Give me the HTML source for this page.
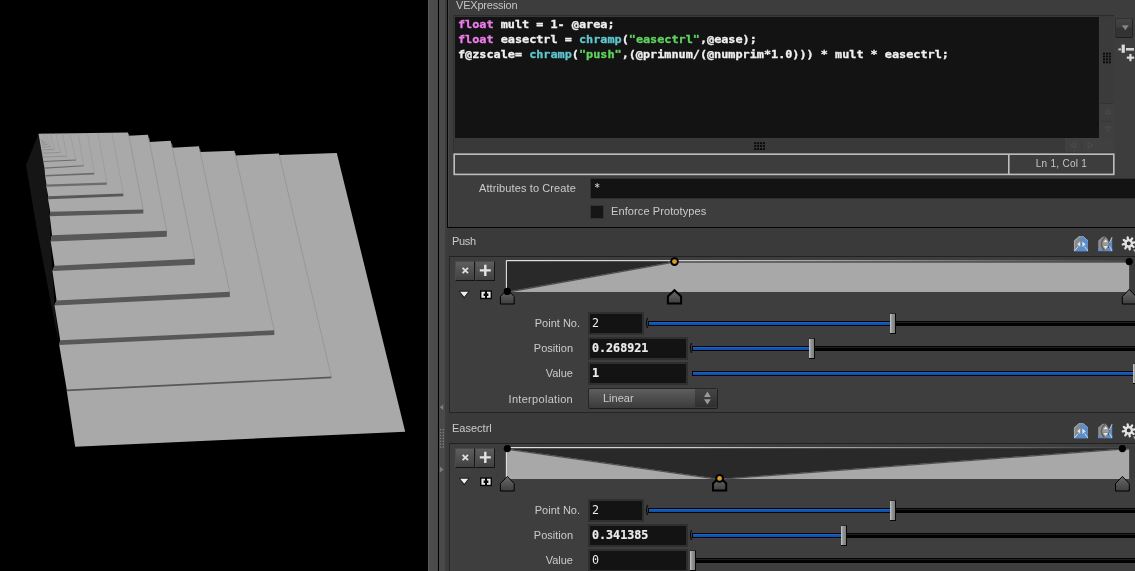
<!DOCTYPE html>
<html><head><meta charset="utf-8"><title>Houdini</title>
<style>
html,body{margin:0;padding:0;background:#000;}
body{width:1135px;height:571px;overflow:hidden;position:relative;font-family:"Liberation Sans",sans-serif;font-size:11.5px;color:#cbcbcb;}
.a{position:absolute;}
.lbl{position:absolute;white-space:nowrap;line-height:14px;height:14px;color:#cbcbcb;font-size:11px;will-change:transform;}
.r{text-align:right;}
.mono{font-family:"DejaVu Sans Mono","Liberation Mono",monospace;}
.code{position:absolute;left:458.1px;white-space:pre;font-family:"DejaVu Sans Mono","Liberation Mono",monospace;font-weight:bold;font-size:10.3px;line-height:15px;height:15px;color:#f0f0f0;transform:scaleX(1.1475);transform-origin:0 0;will-change:transform;-webkit-text-stroke:0.3px;}
.kw{color:#ec7cec;}
.fn{color:#5ec6cf;}
.st{color:#5fd25f;}
.fld{position:absolute;background:#131313;border:1px solid #2f2f2f;box-sizing:border-box;}
.fv{position:absolute;white-space:pre;font-family:"DejaVu Sans Mono","Liberation Mono",monospace;font-size:11.7px;line-height:14px;height:14px;color:#ececec;will-change:transform;}
.b{font-weight:bold;-webkit-text-stroke:0.2px;}
.btn{position:absolute;box-sizing:border-box;border-top:1px solid #4a4a4a;border-left:1px solid #4c4c4c;border-right:1px solid #161616;border-bottom:1.4px solid #141414;background:linear-gradient(#5e5e5e,#414141);}
</style></head>
<body>
<svg class="a" style="left:0;top:0" width="428" height="571" viewBox="0 0 428 571">
<rect width="428" height="571" fill="#000"/>
<polygon points="38.5,133.7 26,165 37,230 60,350 76,446 66.8,390 59,345 54.5,305 52.4,271 50.7,241 49.8,216 48,198 46.3,186 45.2,176 44.5,168" fill="#151515"/>
<polygon points="38.5,133.7 128.0,132.6 128.6,135.8 148.0,134.8 149.3,141.9 170.7,140.7 172.0,147.8 199.0,146.3 200.0,152.0 234.5,150.8 235.3,155.5 279.0,153.4 279.3,154.9 336.8,153.0 405.2,431.7 75.2,446.7 66.8,391.0 66.8,389.9 59.2,345.0 60.2,340.3 54.5,305.6 56.6,300.4 52.4,271.0 54.5,265.7 50.7,241.5 52.0,235.0 49.8,216.3 50.2,211.8 48.0,199.0 48.3,196.4 46.3,186.5 46.5,184.8 45.2,176.5 44.5,168.3" fill="#a9a9a9"/>
<polygon points="66.8,389.6 331.4,376.6 331.4,378.2 66.8,391.2" fill="#585858"/>
<polygon points="60.2,340.3 274.3,330.3 274.3,334.9 59.2,345.0" fill="#585858"/>
<polygon points="56.6,300.4 229.8,291.8 229.8,297.0 54.5,305.6" fill="#585858"/>
<polygon points="54.5,265.7 194.8,258.8 194.8,264.8 52.4,271.0" fill="#585858"/>
<polygon points="52.0,235.2 166.8,230.8 166.8,236.8 50.7,241.5" fill="#585858"/>
<polygon points="50.2,211.8 143.3,209.6 143.3,213.6 49.8,216.3" fill="#585858"/>
<polygon points="48.3,196.2 123.3,193.4 123.3,196.2 48.0,199.2" fill="#585858"/>
<polygon points="46.5,184.6 106.9,182.6 106.9,184.7 46.3,186.8" fill="#6c6c6c"/>
<polygon points="45.3,175.0 94.3,172.8 94.3,174.4 45.2,176.6" fill="#6c6c6c"/>
<polygon points="44.5,167.6 83.7,165.2 83.7,166.3 44.5,168.7" fill="#6c6c6c"/>
<polygon points="43.6,161.0 76.0,159.6 76.0,160.5 43.6,161.9" fill="#6c6c6c"/>
<line x1="42.6" y1="157.0" x2="67.0" y2="156.2" stroke="#858585" stroke-width="0.7"/>
<line x1="42.3" y1="153.2" x2="60.4" y2="152.4" stroke="#858585" stroke-width="0.7"/>
<line x1="42.2" y1="150.0" x2="54.6" y2="149.2" stroke="#858585" stroke-width="0.7"/>
<line x1="42.0" y1="147.4" x2="50.4" y2="146.6" stroke="#858585" stroke-width="0.7"/>
<line x1="41.9" y1="145.2" x2="47.4" y2="144.4" stroke="#858585" stroke-width="0.7"/>
<line x1="41.8" y1="143.4" x2="45.4" y2="142.6" stroke="#858585" stroke-width="0.7"/>
<line x1="41.7" y1="142.0" x2="44.0" y2="141.2" stroke="#858585" stroke-width="0.7"/>
<line x1="41.6" y1="140.8" x2="43.0" y2="140.0" stroke="#858585" stroke-width="0.7"/>
<line x1="41.5" y1="139.8" x2="42.2" y2="139.0" stroke="#858585" stroke-width="0.7"/>
<line x1="331.4" y1="377.0" x2="279.3" y2="155.0" stroke="#939393" stroke-width="0.8"/>
<line x1="274.3" y1="331.0" x2="235.0" y2="153.0" stroke="#939393" stroke-width="0.8"/>
<line x1="229.8" y1="292.0" x2="199.6" y2="149.0" stroke="#939393" stroke-width="0.8"/>
<line x1="194.8" y1="259.0" x2="171.5" y2="143.5" stroke="#939393" stroke-width="0.8"/>
<line x1="166.8" y1="231.0" x2="148.7" y2="137.5" stroke="#939393" stroke-width="0.8"/>
<line x1="143.3" y1="210.0" x2="128.5" y2="134.0" stroke="#939393" stroke-width="0.8"/>
<line x1="123.3" y1="193.5" x2="112.0" y2="133.0" stroke="#9a9a9a" stroke-width="0.7"/>
<line x1="106.9" y1="182.8" x2="98.0" y2="133.0" stroke="#9a9a9a" stroke-width="0.7"/>
<line x1="94.3" y1="173.0" x2="87.5" y2="133.2" stroke="#9a9a9a" stroke-width="0.7"/>
<line x1="83.7" y1="165.4" x2="78.0" y2="133.3" stroke="#9a9a9a" stroke-width="0.7"/>
<line x1="76.0" y1="159.8" x2="70.0" y2="133.4" stroke="#9a9a9a" stroke-width="0.7"/>
<line x1="67.0" y1="156.2" x2="62.3" y2="133.4" stroke="#9a9a9a" stroke-width="0.7"/>
<line x1="60.4" y1="152.4" x2="56.0" y2="133.5" stroke="#9a9a9a" stroke-width="0.7"/>
<line x1="54.6" y1="149.2" x2="49.7" y2="133.5" stroke="#9a9a9a" stroke-width="0.7"/>
<line x1="50.4" y1="146.6" x2="45.6" y2="133.6" stroke="#9a9a9a" stroke-width="0.7"/>
<line x1="47.4" y1="144.4" x2="42.6" y2="133.6" stroke="#9a9a9a" stroke-width="0.7"/>
</svg>
<div class="a" style="left:428px;top:0;width:707px;height:571px;background:#3a3a3a"></div>
<div class="a" style="left:428px;top:0;width:10px;height:571px;background:linear-gradient(90deg,#5e5e5e 0,#4d4d4d 1.5px,#4a4a4a 9px,#444 10px)"></div>
<div class="a" style="left:438px;top:0;width:1px;height:571px;background:#000"></div>
<div class="a" style="left:439px;top:0;width:5.5px;height:571px;background:#494949"></div>
<div class="a" style="left:444.5px;top:0;width:3px;height:571px;background:#3c3c3c"></div>
<svg class="a" style="left:438px;top:400px" width="10" height="80" viewBox="438 400 10 80"><polygon points="443.2,404.6 443.2,410 439.6,407.3" fill="#7d7d7d"/><polygon points="439.8,466.4 439.8,472.4 443.6,469.4" fill="#7d7d7d"/><rect x="439.8" y="429.0" width="1.4" height="1.4" fill="#7e7e7e"/><rect x="442.6" y="429.0" width="1.4" height="1.4" fill="#7e7e7e"/><rect x="439.8" y="431.9" width="1.4" height="1.4" fill="#7e7e7e"/><rect x="442.6" y="431.9" width="1.4" height="1.4" fill="#7e7e7e"/><rect x="439.8" y="434.8" width="1.4" height="1.4" fill="#7e7e7e"/><rect x="442.6" y="434.8" width="1.4" height="1.4" fill="#7e7e7e"/><rect x="439.8" y="437.7" width="1.4" height="1.4" fill="#7e7e7e"/><rect x="442.6" y="437.7" width="1.4" height="1.4" fill="#7e7e7e"/><rect x="439.8" y="440.6" width="1.4" height="1.4" fill="#7e7e7e"/><rect x="442.6" y="440.6" width="1.4" height="1.4" fill="#7e7e7e"/><rect x="439.8" y="443.5" width="1.4" height="1.4" fill="#7e7e7e"/><rect x="442.6" y="443.5" width="1.4" height="1.4" fill="#7e7e7e"/><rect x="439.8" y="446.4" width="1.4" height="1.4" fill="#7e7e7e"/><rect x="442.6" y="446.4" width="1.4" height="1.4" fill="#7e7e7e"/></svg>
<div class="a" style="left:447px;top:0;width:688px;height:227px;background:#3d3d3d;border-left:1.4px solid #050505;border-bottom:1.6px solid #050505;box-sizing:content-box"></div>
<div class="a" style="left:448.4px;top:0;width:1px;height:227px;background:#484848"></div>
<div class="lbl" style="left:455.8px;top:-2.1px;letter-spacing:-0.2px;color:#c4c4c4">VEXpression</div>
<div class="a" style="left:453px;top:15px;width:661px;height:138px;background:#393939;border-top:1.5px solid #2c2c2c;border-left:1.5px solid #313131;box-sizing:border-box"></div>
<div class="a" style="left:455px;top:17px;width:644px;height:121px;background:#131313"></div>
<div class="code" style="top:16.6px"><span class="kw">float</span> mult = 1- @area;</div>
<div class="code" style="top:31.6px"><span class="kw">float</span> easectrl = <span class="fn">chramp</span>(<span class="st">"easectrl"</span>,@ease);</div>
<div class="code" style="top:46.6px">f@zscale= <span class="fn">chramp</span>(<span class="st">"push"</span>,(@primnum/(@numprim*1.0))) * mult * easectrl;</div>
<div class="a" style="left:1099px;top:17px;width:15px;height:121px;background:#3f3f3f"></div>
<div class="a" style="left:1099.6px;top:17px;width:14px;height:85.6px;background:#3b3b3b;border-bottom:1px solid #343434;border-radius:0 0 2px 2px"></div>
<div class="a" style="left:1064.6px;top:138.4px;width:49.4px;height:14px;background:#404040"></div>
<svg class="a" style="left:0;top:0;pointer-events:none" width="1135" height="571" viewBox="0 0 1135 571"><rect x="1103.0" y="52.6" width="2.0" height="2.0" fill="#0a0a0a"/><rect x="1103.0" y="55.5" width="2.0" height="2.0" fill="#0a0a0a"/><rect x="1103.0" y="58.4" width="2.0" height="2.0" fill="#0a0a0a"/><rect x="1103.0" y="61.3" width="2.0" height="2.0" fill="#0a0a0a"/><rect x="1105.9" y="52.6" width="2.0" height="2.0" fill="#0a0a0a"/><rect x="1105.9" y="55.5" width="2.0" height="2.0" fill="#0a0a0a"/><rect x="1105.9" y="58.4" width="2.0" height="2.0" fill="#0a0a0a"/><rect x="1105.9" y="61.3" width="2.0" height="2.0" fill="#0a0a0a"/><rect x="1108.8" y="52.6" width="2.0" height="2.0" fill="#0a0a0a"/><rect x="1108.8" y="55.5" width="2.0" height="2.0" fill="#0a0a0a"/><rect x="1108.8" y="58.4" width="2.0" height="2.0" fill="#0a0a0a"/><rect x="1108.8" y="61.3" width="2.0" height="2.0" fill="#0a0a0a"/><rect x="754.2" y="142.2" width="2.0" height="2.0" fill="#0a0a0a"/><rect x="754.2" y="145.1" width="2.0" height="2.0" fill="#0a0a0a"/><rect x="754.2" y="148.0" width="2.0" height="2.0" fill="#0a0a0a"/><rect x="757.1" y="142.2" width="2.0" height="2.0" fill="#0a0a0a"/><rect x="757.1" y="145.1" width="2.0" height="2.0" fill="#0a0a0a"/><rect x="757.1" y="148.0" width="2.0" height="2.0" fill="#0a0a0a"/><rect x="760.0" y="142.2" width="2.0" height="2.0" fill="#0a0a0a"/><rect x="760.0" y="145.1" width="2.0" height="2.0" fill="#0a0a0a"/><rect x="760.0" y="148.0" width="2.0" height="2.0" fill="#0a0a0a"/><rect x="762.9" y="142.2" width="2.0" height="2.0" fill="#0a0a0a"/><rect x="762.9" y="145.1" width="2.0" height="2.0" fill="#0a0a0a"/><rect x="762.9" y="148.0" width="2.0" height="2.0" fill="#0a0a0a"/><polygon points="1107.6,108.8 1110.4,113.6 1104.8,113.6" fill="none" stroke="#4e4e4e" stroke-width="0.9"/><line x1="1101" y1="121.4" x2="1113" y2="121.4" stroke="#383838" stroke-width="0.9"/><polygon points="1107.6,131.6 1110.4,127.2 1104.8,127.2" fill="none" stroke="#4e4e4e" stroke-width="0.9"/><polygon points="1070.4,145.4 1075.4,142.8 1075.4,148" fill="none" stroke="#4e4e4e" stroke-width="0.9"/><polygon points="1093.2,145.4 1088.2,142.8 1088.2,148" fill="none" stroke="#4e4e4e" stroke-width="0.9"/><line x1="1081.8" y1="141" x2="1081.8" y2="150" stroke="#3a3a3a" stroke-width="0.9"/><rect x="454.2" y="154.2" width="659.6" height="20.2" fill="#3d3d3d" stroke="#bebebe" stroke-width="1.6"/><line x1="1008.8" y1="154" x2="1008.8" y2="174.5" stroke="#bebebe" stroke-width="1.6"/></svg>
<div class="lbl" style="left:1009px;top:157.3px;width:105px;text-align:center;font-size:10px;letter-spacing:0.28px;color:#c6c6c6">Ln 1, Col 1</div>
<div class="a" style="left:1115.4px;top:18.4px;width:18px;height:19.2px;box-sizing:border-box;border-top:1px solid #303030;border-left:1px solid #2e2e2e;border-right:1.2px solid #242424;border-bottom:1.6px solid #1e1e1e;border-radius:2px;background:linear-gradient(#444 0,#3b3b3b 50%,#323232 52%,#343434 100%)"></div>
<svg class="a" style="left:1114px;top:16px" width="21" height="46" viewBox="1114 16 21 46"><polygon points="1121.8,25.2 1128.8,25.2 1125.3,30.2" fill="#848484"/><rect x="1121.6" y="44.6" width="3.2" height="8.2" fill="#dcdcdc"/><rect x="1118.4" y="48.4" width="2.6" height="2" fill="#c8c8c8"/><rect x="1126" y="48" width="8" height="2.6" fill="#d4d4d4"/><rect x="1129.4" y="54" width="2.1" height="7.2" fill="#e0e0e0"/><rect x="1126.8" y="56.6" width="7.4" height="2.1" fill="#e0e0e0"/></svg>
<div class="lbl" style="left:478.6px;top:181.4px;letter-spacing:0.11px">Attributes to Create</div>
<div class="fld" style="left:590px;top:178px;width:560px;height:21.4px"></div>
<div class="fv" style="left:594.2px;top:180.4px;font-size:10.5px">*</div>
<div class="a" style="left:590.4px;top:205.4px;width:13.6px;height:13.2px;box-sizing:border-box;background:#161616;border:1px solid #333"></div>
<div class="lbl" style="left:611.2px;top:204.2px;letter-spacing:0.1px">Enforce Prototypes</div>
<div class="lbl" style="left:452.4px;top:233.9px;letter-spacing:-0.3px">Push</div>
<svg class="a" style="left:1070px;top:234.0px" width="65" height="20" viewBox="1070 234 65 20"><polygon points="1074.2,251.2 1074.2,240.6 1079,236.4 1083.4,236.4 1088,240.6 1088,251.2" fill="#5a8dca"/><polygon points="1074.2,251.2 1074.2,240.6 1079,236.4 1080.4,236.4 1080.4,245 " fill="#8a8a8a"/><polygon points="1074.2,251.2 1080.6,243.6 1081.6,243.6 1088,251.2" fill="#5a8dca"/><line x1="1081.2" y1="238" x2="1081.2" y2="248" stroke="#7a8694" stroke-width="1"/><polygon points="1077.2,244.2 1080.2,241.6 1080.2,246.8" fill="#e4e4e4"/><polygon points="1085.6,244.2 1082.4,241.4 1082.4,247" fill="#e4e4e4"/><polyline points="1074.4,251 1074.4,240.8 1079,236.6 1083.4,236.6 1088,240.8" fill="none" stroke="#c4ccd4" stroke-width="0.7" opacity="0.8"/><line x1="1074.4" y1="251" x2="1078.2" y2="246.6" stroke="#e8e8e8" stroke-width="0.8"/><line x1="1088" y1="251" x2="1084.6" y2="246.6" stroke="#e8e8e8" stroke-width="0.8"/><polygon points="1098,248 1112.2,248 1112.2,251.2 1098,251.2" fill="#5a8dca"/><polygon points="1112.2,237 1112.2,251.2 1108.6,251.2 1109.2,244" fill="#5a8dca"/><path d="M1098.2,240.6 L1102.6,236.8 L1105.6,236.8 Q1109,240 1109,244 Q1109,248.4 1104.2,251.4 L1098.2,247.4 Z" fill="#8c8c8c"/><path d="M1105.4,237.2 Q1101.4,240 1101.4,244 Q1101.4,248 1104.4,250.8" fill="none" stroke="#5f5f5f" stroke-width="1.3"/><polygon points="1105.6,239.4 1108,242.2 1103.2,242.2" fill="#e6e6e6"/><polygon points="1105.6,249 1108,246 1103.2,246" fill="#e6e6e6"/><rect x="1103" y="243.2" width="5.6" height="2" fill="#9c9c9c"/><line x1="1112" y1="237.2" x2="1109.4" y2="243" stroke="#e4e4e4" stroke-width="0.8"/><line x1="1112" y1="251" x2="1109.6" y2="246.4" stroke="#e4e4e4" stroke-width="0.8"/><line x1="1132.05" y1="242.81" x2="1134.61" y2="242.36" stroke="#e2e2e2" stroke-width="2.3" stroke-linecap="round"/><line x1="1131.49" y1="245.35" x2="1133.61" y2="246.84" stroke="#e2e2e2" stroke-width="2.3" stroke-linecap="round"/><line x1="1129.29" y1="246.75" x2="1129.74" y2="249.31" stroke="#e2e2e2" stroke-width="2.3" stroke-linecap="round"/><line x1="1126.75" y1="246.19" x2="1125.26" y2="248.31" stroke="#e2e2e2" stroke-width="2.3" stroke-linecap="round"/><line x1="1125.35" y1="243.99" x2="1122.79" y2="244.44" stroke="#e2e2e2" stroke-width="2.3" stroke-linecap="round"/><line x1="1125.91" y1="241.45" x2="1123.79" y2="239.96" stroke="#e2e2e2" stroke-width="2.3" stroke-linecap="round"/><line x1="1128.11" y1="240.05" x2="1127.66" y2="237.49" stroke="#e2e2e2" stroke-width="2.3" stroke-linecap="round"/><line x1="1130.65" y1="240.61" x2="1132.14" y2="238.49" stroke="#e2e2e2" stroke-width="2.3" stroke-linecap="round"/><circle cx="1128.7" cy="243.4" r="3.1" fill="none" stroke="#e2e2e2" stroke-width="2.4"/><circle cx="1128.7" cy="243.4" r="1.8" fill="#333"/><polygon points="1133,249.6 1135,249.6 1135,252.6" fill="#bdbdbd"/></svg>
<div class="a" style="left:449px;top:255.8px;width:700px;height:157.4px;box-sizing:border-box;border:1px solid #262626;border-top:1.4px solid #222;border-bottom:1.3px solid #242424;background:#3e3e3e"></div>
<div class="btn" style="left:454.6px;top:260.6px;width:20.2px;height:20.6px"></div>
<div class="btn" style="left:474.8px;top:260.6px;width:20.2px;height:20.6px"></div>
<svg class="a" style="left:450px;top:258.0px" width="50" height="45" viewBox="450 258 50 45"><path d="M462.6,267.8 L468,273.2 M468,267.8 L462.6,273.2" stroke="#dcdcdc" stroke-width="1.9" fill="none"/><path d="M479.8,270.4 H490.8 M485.3,264.8 V276" stroke="#e4e4e4" stroke-width="2.4" fill="none"/><polygon points="458.6,290.8 469.8,290.8 464.2,298.4" fill="#1c1c1c"/><polygon points="460.2,291.8 468.2,291.8 464.2,296.8" fill="#f0f0f0"/><rect x="480" y="290.4" width="12" height="8.8" fill="#080808"/><path d="M481.4,291.8 H485 V293.6 H483.6 V296 H485 V297.8 H481.4 Z M490.6,291.8 H487 V293.6 H488.4 V296 H487 V297.8 H490.6 Z" fill="#ececec"/><polygon points="484,294.4 488,294.4 486,297.4" fill="#0a0a0a"/></svg>
<svg class="a" style="left:495px;top:256.0px" width="640" height="52" viewBox="495 256 640 52">
<rect x="506.4" y="260.6" width="628.6" height="31.4" fill="#292929"/>
<rect x="1129.5" y="259.6" width="8" height="32.4" fill="#3b3b3b"/>
<polygon points="506.9,292.0 506.4,292.0 673.9,261.8 1129.2,261.8 1129.2,292.0" fill="#a8a8a8"/>
<polyline points="506.4,292.3 673.9,262.1 1129.2,262.1" fill="none" stroke="#505050" stroke-width="1.3"/>
<rect x="506.4" y="260.1" width="620.8" height="1.1" fill="url(#tg)"/>
<defs><linearGradient id="tg" x1="0" y1="0" x2="1" y2="0"><stop offset="0" stop-color="#f2f2f2"/><stop offset="0.3" stop-color="#dcdcdc"/><stop offset="0.62" stop-color="#9c9c9c"/><stop offset="0.9" stop-color="#5c5c5c"/><stop offset="1" stop-color="#444"/></linearGradient></defs>
<line x1="506.4" y1="260.4" x2="506.4" y2="292.0" stroke="#e4e4e4" stroke-width="1.1"/>
<polygon points="507.3,289.4 514.2,296.6 514.2,304 500.4,304 500.4,296.6" fill="url(#mg)" stroke="#000" stroke-width="1" stroke-linejoin="miter"/>
<polygon points="674.5,290.2 681.1,296.4 681.1,303.6 667.9,303.6 667.9,296.4" fill="url(#mg)" stroke="#000" stroke-width="2" stroke-linejoin="miter"/>
<polygon points="1129.2,289.4 1136.1,296.6 1136.1,304 1122.3,304 1122.3,296.6" fill="url(#mg)" stroke="#000" stroke-width="1" stroke-linejoin="miter"/>
<circle cx="507.3" cy="291.4" r="3.6" fill="#000"/>
<circle cx="674.5" cy="261.6" r="4.3" fill="#000"/><circle cx="674.5" cy="261.6" r="2.4" fill="#dc9c28"/>
<circle cx="1129.2" cy="261.6" r="3.6" fill="#000"/>
<defs><linearGradient id="mg" x1="0" y1="0" x2="0" y2="1"><stop offset="0" stop-color="#6a6a6a"/><stop offset="1" stop-color="#3e3e3e"/></linearGradient></defs>
</svg>
<div class="lbl r" style="left:479.6px;top:316.0px;width:100px;letter-spacing:0">Point No.</div>
<div class="fld" style="left:588.0px;top:312.4px;width:56.0px;height:22.4px;border-width:2px"></div>
<div class="fv" style="left:592.4px;top:316.1px">2</div>
<div class="a" style="left:648.0px;top:321.0px;width:491.4px;height:4.8px;background:linear-gradient(#050505 0,#050505 1.1px,#2c2c2c 1.2px,#101010 1.9px,#020202 2px)"></div>
<div class="a" style="left:648.0px;top:321.0px;width:244.1px;height:4.8px;background:#050505"></div>
<div class="a" style="left:648.6px;top:322.0px;width:244.1px;height:3.1px;background:linear-gradient(#2969c0,#0e55b6 45%,#0c50ae)"></div>
<svg class="a" style="left:644.0px;top:317.4px" width="5" height="12" viewBox="0 0 5 12"><path d="M3.6,1 Q1.2,6 3.6,11" fill="none" stroke="#0c0c0c" stroke-width="1.2"/></svg>
<div class="a" style="left:889.6px;top:312.7px;width:6.4px;height:21.2px;box-sizing:border-box;border-top:1px solid #2c2c2c;border-left:0;border-right:1.1px solid #080808;border-bottom:1.1px solid #080808;background:linear-gradient(90deg,#cacaca 0,#a8a8a8 1.2px,#939393 2px,#7e7e7e 100%)"></div>
<div class="lbl r" style="left:473.4px;top:341.0px;width:100px;letter-spacing:0">Position</div>
<div class="fld" style="left:588.0px;top:337.4px;width:100.4px;height:22.4px;border-width:2px"></div>
<div class="fv b" style="left:592.4px;top:341.1px">0.268921</div>
<div class="a" style="left:692.4px;top:346.0px;width:447.0px;height:4.8px;background:linear-gradient(#050505 0,#050505 1.1px,#2c2c2c 1.2px,#101010 1.9px,#020202 2px)"></div>
<div class="a" style="left:692.4px;top:346.0px;width:119.0px;height:4.8px;background:#050505"></div>
<div class="a" style="left:693.0px;top:347.0px;width:119.0px;height:3.1px;background:linear-gradient(#2969c0,#0e55b6 45%,#0c50ae)"></div>
<svg class="a" style="left:688.4px;top:342.4px" width="5" height="12" viewBox="0 0 5 12"><path d="M3.6,1 Q1.2,6 3.6,11" fill="none" stroke="#0c0c0c" stroke-width="1.2"/></svg>
<div class="a" style="left:808.9px;top:337.7px;width:6.4px;height:21.2px;box-sizing:border-box;border-top:1px solid #2c2c2c;border-left:0;border-right:1.1px solid #080808;border-bottom:1.1px solid #080808;background:linear-gradient(90deg,#cacaca 0,#a8a8a8 1.2px,#939393 2px,#7e7e7e 100%)"></div>
<div class="lbl r" style="left:473.4px;top:365.8px;width:100px;letter-spacing:0">Value</div>
<div class="fld" style="left:588.0px;top:362.2px;width:100.4px;height:22.4px;border-width:2px"></div>
<div class="fv b" style="left:592.4px;top:365.9px">1</div>
<div class="a" style="left:692.4px;top:370.8px;width:447.0px;height:4.8px;background:linear-gradient(#050505 0,#050505 1.1px,#2c2c2c 1.2px,#101010 1.9px,#020202 2px)"></div>
<div class="a" style="left:692.4px;top:370.8px;width:442.8px;height:4.8px;background:#050505"></div>
<div class="a" style="left:693.0px;top:371.8px;width:442.8px;height:3.1px;background:linear-gradient(#2969c0,#0e55b6 45%,#0c50ae)"></div>
<div class="a" style="left:1132.7px;top:362.5px;width:6.4px;height:21.2px;box-sizing:border-box;border-top:1px solid #2c2c2c;border-left:0;border-right:1.1px solid #080808;border-bottom:1.1px solid #080808;background:linear-gradient(90deg,#cacaca 0,#a8a8a8 1.2px,#939393 2px,#7e7e7e 100%)"></div>
<div class="lbl r" style="left:473.4px;top:391.5px;width:100px;letter-spacing:0.3px">Interpolation</div>
<div class="a" style="left:588.4px;top:387.6px;width:129.8px;height:21.2px;box-sizing:border-box;border:1px solid #262626;border-bottom:1.6px solid #1c1c1c;border-right:1.3px solid #1e1e1e;border-radius:2px;background:linear-gradient(#5e5e5e,#3b3b3b)"></div>
<div class="a" style="left:695.4px;top:388.6px;width:21.2px;height:18.8px;border-radius:0 2px 2px 0;background:linear-gradient(#454545,#2f2f2f)"></div>
<div class="lbl" style="left:603.2px;top:390.5px">Linear</div>
<svg class="a" style="left:700px;top:390.0px" width="14" height="16" viewBox="700 390 14 16"><polygon points="707.4,391.4 710.8,397 704,397" fill="#9a9a9a"/><polygon points="707.4,404.4 710.8,399.2 704,399.2" fill="#9a9a9a"/></svg>
<div class="lbl" style="left:452.4px;top:420.9px;letter-spacing:0px">Easectrl</div>
<svg class="a" style="left:1070px;top:421.0px" width="65" height="20" viewBox="1070 234 65 20"><polygon points="1074.2,251.2 1074.2,240.6 1079,236.4 1083.4,236.4 1088,240.6 1088,251.2" fill="#5a8dca"/><polygon points="1074.2,251.2 1074.2,240.6 1079,236.4 1080.4,236.4 1080.4,245 " fill="#8a8a8a"/><polygon points="1074.2,251.2 1080.6,243.6 1081.6,243.6 1088,251.2" fill="#5a8dca"/><line x1="1081.2" y1="238" x2="1081.2" y2="248" stroke="#7a8694" stroke-width="1"/><polygon points="1077.2,244.2 1080.2,241.6 1080.2,246.8" fill="#e4e4e4"/><polygon points="1085.6,244.2 1082.4,241.4 1082.4,247" fill="#e4e4e4"/><polyline points="1074.4,251 1074.4,240.8 1079,236.6 1083.4,236.6 1088,240.8" fill="none" stroke="#c4ccd4" stroke-width="0.7" opacity="0.8"/><line x1="1074.4" y1="251" x2="1078.2" y2="246.6" stroke="#e8e8e8" stroke-width="0.8"/><line x1="1088" y1="251" x2="1084.6" y2="246.6" stroke="#e8e8e8" stroke-width="0.8"/><polygon points="1098,248 1112.2,248 1112.2,251.2 1098,251.2" fill="#5a8dca"/><polygon points="1112.2,237 1112.2,251.2 1108.6,251.2 1109.2,244" fill="#5a8dca"/><path d="M1098.2,240.6 L1102.6,236.8 L1105.6,236.8 Q1109,240 1109,244 Q1109,248.4 1104.2,251.4 L1098.2,247.4 Z" fill="#8c8c8c"/><path d="M1105.4,237.2 Q1101.4,240 1101.4,244 Q1101.4,248 1104.4,250.8" fill="none" stroke="#5f5f5f" stroke-width="1.3"/><polygon points="1105.6,239.4 1108,242.2 1103.2,242.2" fill="#e6e6e6"/><polygon points="1105.6,249 1108,246 1103.2,246" fill="#e6e6e6"/><rect x="1103" y="243.2" width="5.6" height="2" fill="#9c9c9c"/><line x1="1112" y1="237.2" x2="1109.4" y2="243" stroke="#e4e4e4" stroke-width="0.8"/><line x1="1112" y1="251" x2="1109.6" y2="246.4" stroke="#e4e4e4" stroke-width="0.8"/><line x1="1132.05" y1="242.81" x2="1134.61" y2="242.36" stroke="#e2e2e2" stroke-width="2.3" stroke-linecap="round"/><line x1="1131.49" y1="245.35" x2="1133.61" y2="246.84" stroke="#e2e2e2" stroke-width="2.3" stroke-linecap="round"/><line x1="1129.29" y1="246.75" x2="1129.74" y2="249.31" stroke="#e2e2e2" stroke-width="2.3" stroke-linecap="round"/><line x1="1126.75" y1="246.19" x2="1125.26" y2="248.31" stroke="#e2e2e2" stroke-width="2.3" stroke-linecap="round"/><line x1="1125.35" y1="243.99" x2="1122.79" y2="244.44" stroke="#e2e2e2" stroke-width="2.3" stroke-linecap="round"/><line x1="1125.91" y1="241.45" x2="1123.79" y2="239.96" stroke="#e2e2e2" stroke-width="2.3" stroke-linecap="round"/><line x1="1128.11" y1="240.05" x2="1127.66" y2="237.49" stroke="#e2e2e2" stroke-width="2.3" stroke-linecap="round"/><line x1="1130.65" y1="240.61" x2="1132.14" y2="238.49" stroke="#e2e2e2" stroke-width="2.3" stroke-linecap="round"/><circle cx="1128.7" cy="243.4" r="3.1" fill="none" stroke="#e2e2e2" stroke-width="2.4"/><circle cx="1128.7" cy="243.4" r="1.8" fill="#333"/><polygon points="1133,249.6 1135,249.6 1135,252.6" fill="#bdbdbd"/></svg>
<div class="a" style="left:449px;top:442.8px;width:700px;height:157.4px;box-sizing:border-box;border:1px solid #262626;border-top:1.4px solid #222;border-bottom:1.3px solid #242424;background:#3e3e3e"></div>
<div class="btn" style="left:454.6px;top:447.6px;width:20.2px;height:20.6px"></div>
<div class="btn" style="left:474.8px;top:447.6px;width:20.2px;height:20.6px"></div>
<svg class="a" style="left:450px;top:445.0px" width="50" height="45" viewBox="450 258 50 45"><path d="M462.6,267.8 L468,273.2 M468,267.8 L462.6,273.2" stroke="#dcdcdc" stroke-width="1.9" fill="none"/><path d="M479.8,270.4 H490.8 M485.3,264.8 V276" stroke="#e4e4e4" stroke-width="2.4" fill="none"/><polygon points="458.6,290.8 469.8,290.8 464.2,298.4" fill="#1c1c1c"/><polygon points="460.2,291.8 468.2,291.8 464.2,296.8" fill="#f0f0f0"/><rect x="480" y="290.4" width="12" height="8.8" fill="#080808"/><path d="M481.4,291.8 H485 V293.6 H483.6 V296 H485 V297.8 H481.4 Z M490.6,291.8 H487 V293.6 H488.4 V296 H487 V297.8 H490.6 Z" fill="#ececec"/><polygon points="484,294.4 488,294.4 486,297.4" fill="#0a0a0a"/></svg>
<svg class="a" style="left:495px;top:443.0px" width="640" height="52" viewBox="495 256 640 52">
<rect x="506.4" y="260.6" width="628.6" height="31.4" fill="#292929"/>
<rect x="1129.5" y="259.6" width="8" height="32.4" fill="#3b3b3b"/>
<polygon points="506.9,292.0 506.4,261.8 719.0,292.0 1122.4,261.8 1129.2,261.8 1129.2,292.0" fill="#a8a8a8"/>
<polyline points="506.4,262.1 719.0,292.3 1122.4,262.1 1129.2,262.1" fill="none" stroke="#505050" stroke-width="1.3"/>
<rect x="506.4" y="260.1" width="620.8" height="1.1" fill="url(#tg)"/>
<defs><linearGradient id="tg" x1="0" y1="0" x2="1" y2="0"><stop offset="0" stop-color="#f2f2f2"/><stop offset="0.3" stop-color="#dcdcdc"/><stop offset="0.62" stop-color="#9c9c9c"/><stop offset="0.9" stop-color="#5c5c5c"/><stop offset="1" stop-color="#444"/></linearGradient></defs>
<line x1="506.4" y1="260.4" x2="506.4" y2="292.0" stroke="#e4e4e4" stroke-width="1.1"/>
<polygon points="507.3,289.4 514.2,296.6 514.2,304 500.4,304 500.4,296.6" fill="url(#mg)" stroke="#000" stroke-width="1" stroke-linejoin="miter"/>
<polygon points="719.6,290.2 726.2,296.4 726.2,303.6 713.0,303.6 713.0,296.4" fill="url(#mg)" stroke="#000" stroke-width="2" stroke-linejoin="miter"/>
<polygon points="1122.4,289.4 1129.3,296.6 1129.3,304 1115.5,304 1115.5,296.6" fill="url(#mg)" stroke="#000" stroke-width="1" stroke-linejoin="miter"/>
<circle cx="507.3" cy="261.6" r="3.6" fill="#000"/>
<circle cx="719.6" cy="291.4" r="4.3" fill="#000"/><circle cx="719.6" cy="291.4" r="2.4" fill="#dc9c28"/>
<circle cx="1122.4" cy="261.6" r="3.6" fill="#000"/>
<defs><linearGradient id="mg" x1="0" y1="0" x2="0" y2="1"><stop offset="0" stop-color="#6a6a6a"/><stop offset="1" stop-color="#3e3e3e"/></linearGradient></defs>
</svg>
<div class="lbl r" style="left:479.6px;top:503.0px;width:100px;letter-spacing:0">Point No.</div>
<div class="fld" style="left:588.0px;top:499.4px;width:56.0px;height:22.4px;border-width:2px"></div>
<div class="fv" style="left:592.4px;top:503.1px">2</div>
<div class="a" style="left:648.0px;top:508.0px;width:491.4px;height:4.8px;background:linear-gradient(#050505 0,#050505 1.1px,#2c2c2c 1.2px,#101010 1.9px,#020202 2px)"></div>
<div class="a" style="left:648.0px;top:508.0px;width:244.1px;height:4.8px;background:#050505"></div>
<div class="a" style="left:648.6px;top:509.0px;width:244.1px;height:3.1px;background:linear-gradient(#2969c0,#0e55b6 45%,#0c50ae)"></div>
<svg class="a" style="left:644.0px;top:504.4px" width="5" height="12" viewBox="0 0 5 12"><path d="M3.6,1 Q1.2,6 3.6,11" fill="none" stroke="#0c0c0c" stroke-width="1.2"/></svg>
<div class="a" style="left:889.6px;top:499.7px;width:6.4px;height:21.2px;box-sizing:border-box;border-top:1px solid #2c2c2c;border-left:0;border-right:1.1px solid #080808;border-bottom:1.1px solid #080808;background:linear-gradient(90deg,#cacaca 0,#a8a8a8 1.2px,#939393 2px,#7e7e7e 100%)"></div>
<div class="lbl r" style="left:473.4px;top:528.0px;width:100px;letter-spacing:0">Position</div>
<div class="fld" style="left:588.0px;top:524.4px;width:100.4px;height:22.4px;border-width:2px"></div>
<div class="fv b" style="left:592.4px;top:528.1px">0.341385</div>
<div class="a" style="left:692.4px;top:533.0px;width:447.0px;height:4.8px;background:linear-gradient(#050505 0,#050505 1.1px,#2c2c2c 1.2px,#101010 1.9px,#020202 2px)"></div>
<div class="a" style="left:692.4px;top:533.0px;width:151.1px;height:4.8px;background:#050505"></div>
<div class="a" style="left:693.0px;top:534.0px;width:151.1px;height:3.1px;background:linear-gradient(#2969c0,#0e55b6 45%,#0c50ae)"></div>
<svg class="a" style="left:688.4px;top:529.4px" width="5" height="12" viewBox="0 0 5 12"><path d="M3.6,1 Q1.2,6 3.6,11" fill="none" stroke="#0c0c0c" stroke-width="1.2"/></svg>
<div class="a" style="left:841.0px;top:524.7px;width:6.4px;height:21.2px;box-sizing:border-box;border-top:1px solid #2c2c2c;border-left:0;border-right:1.1px solid #080808;border-bottom:1.1px solid #080808;background:linear-gradient(90deg,#cacaca 0,#a8a8a8 1.2px,#939393 2px,#7e7e7e 100%)"></div>
<div class="lbl r" style="left:473.4px;top:552.8px;width:100px;letter-spacing:0">Value</div>
<div class="fld" style="left:588.0px;top:549.2px;width:100.4px;height:22.4px;border-width:2px"></div>
<div class="fv" style="left:592.4px;top:552.9px">0</div>
<div class="a" style="left:692.4px;top:557.8px;width:447.0px;height:4.8px;background:linear-gradient(#050505 0,#050505 1.1px,#2c2c2c 1.2px,#101010 1.9px,#020202 2px)"></div>
<div class="a" style="left:689.8px;top:549.5px;width:6.4px;height:21.2px;box-sizing:border-box;border-top:1px solid #2c2c2c;border-left:0;border-right:1.1px solid #080808;border-bottom:1.1px solid #080808;background:linear-gradient(90deg,#cacaca 0,#a8a8a8 1.2px,#939393 2px,#7e7e7e 100%)"></div>
</body></html>
